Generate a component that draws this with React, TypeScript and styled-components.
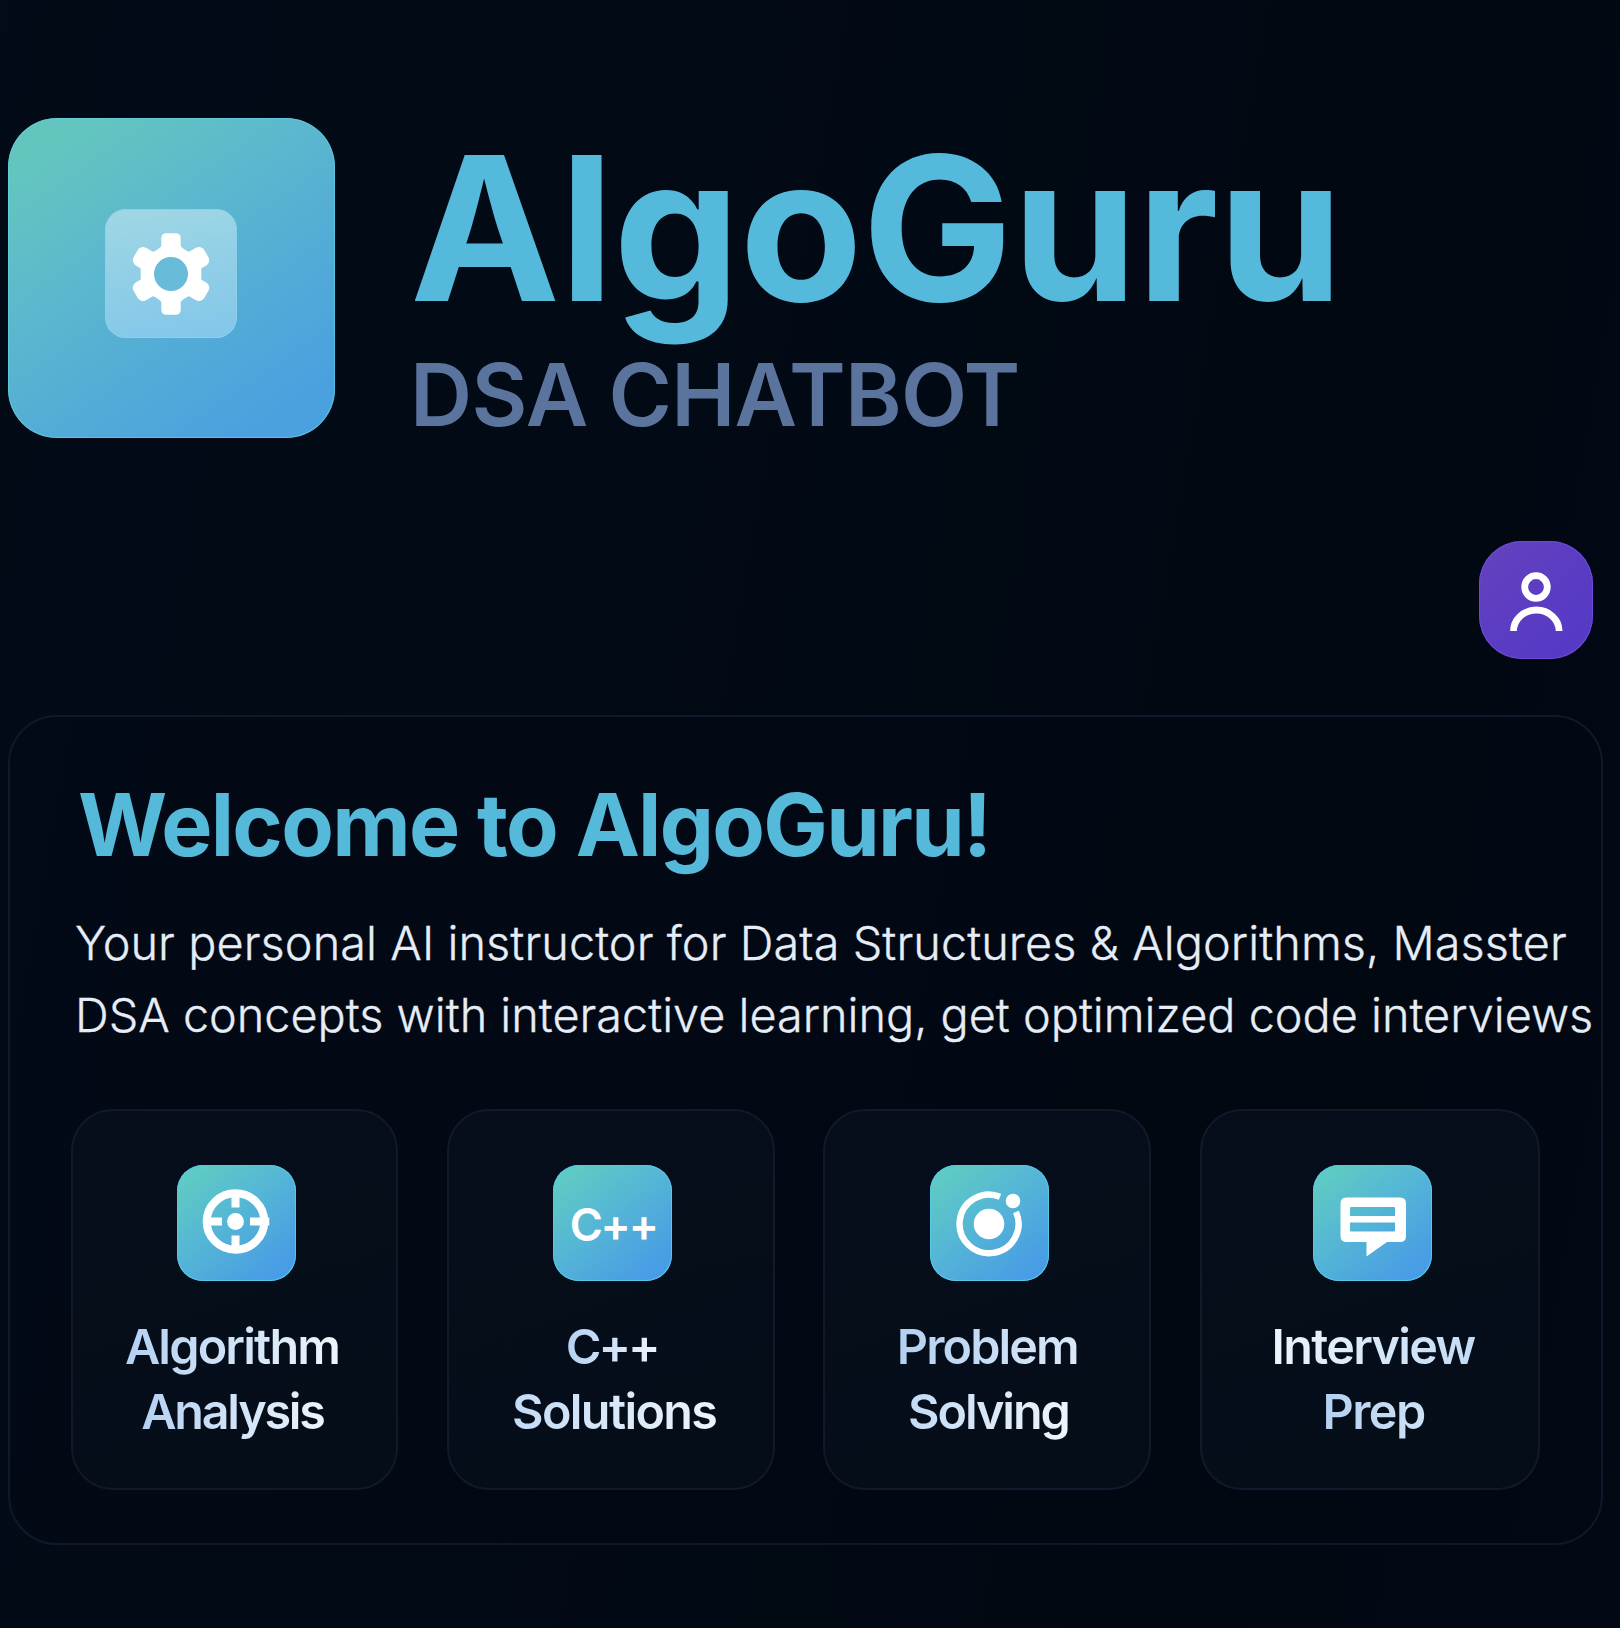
import React from 'react';
import styled, { createGlobalStyle } from 'styled-components';

const GlobalStyle = createGlobalStyle`
  * {
    box-sizing: border-box;
  }
  body {
    margin: 0;
    background: #020812;
    font-family: Inter, 'Liberation Sans', sans-serif;
  }
`;

const Page = styled.div`
  min-height: 1628px;
  width: 1620px;
  padding: 118px 17px 82px 8px;
  overflow: hidden;
  background: linear-gradient(100deg, #030b18 0%, #020a15 40%, #010812 75%, #020914 100%);
`;

const Header = styled.header`
  display: flex;
  align-items: flex-start;
  height: 321px;
`;

const Logo = styled.div`
  display: flex;
  align-items: center;
  justify-content: center;
  flex: none;
  width: 327px;
  height: 320px;
  padding: 0 1px 9px 0;
  border-radius: 49px;
  background: linear-gradient(145deg, #63c6be 10%, #5cb8cd 38%, #53acd6 62%, #4ba1df 88%);
  box-shadow: inset 0 0 0 1px #5fd3e4a0;
`;

const LogoInner = styled.div`
  display: flex;
  align-items: center;
  justify-content: center;
  width: 132px;
  height: 129px;
  border-radius: 21px;
  background: linear-gradient(170deg, #9fd7e4, #82c6ea);
  box-shadow: inset 0 0 0 1px #8fcfe8;
`;

const Brand = styled.div`
  display: flex;
  flex-direction: column;
  gap: 24px;
  margin: 9px 0 0 75px;
`;

const BrandName = styled.h1`
  margin: 0;
  font-size: 201px;
  font-weight: 700;
  line-height: 201px;
  letter-spacing: -0.67px;
  color: #55b9db;
`;

const BrandTag = styled.p`
  margin: 0;
  font-size: 86px;
  font-weight: 600;
  line-height: 86px;
  letter-spacing: -0.72px;
  color: #5a749e;
`;

const Toolbar = styled.div`
  display: flex;
  justify-content: flex-end;
  padding: 102px 10px 56px 0;
`;

const UserButton = styled.button`
  display: flex;
  padding: 0;
  border: 0;
  border-radius: 43px;
  background: linear-gradient(135deg, #6543bd, #5a3cc4 55%, #5539c4);
  box-shadow: inset 0 0 0 1px #6b4ad8;
`;

const Panel = styled.main`
  height: 830px;
  padding: 65px 0 0 61px;
  border: 2px solid #0e192b;
  border-radius: 49px;
  background: rgba(3, 10, 20, 0.35);
`;

const Heading = styled.h2`
  margin: 0 0 39px 7px;
  font-size: 86px;
  font-weight: 700;
  line-height: 86px;
  letter-spacing: -1.73px;
  white-space: nowrap;
  color: #55b9da;
`;

const Intro = styled.p`
  margin: 0 0 58px 4px;
  font-size: 46.8px;
  font-weight: 300;
  line-height: 72px;
  white-space: nowrap;
  color: #e6edf6;
  -webkit-text-stroke: 0.3px #e6edf6;
`;

const IntroLine = styled.span<{ $spacing: number }>`
  display: block;
  letter-spacing: ${(p) => p.$spacing}px;
`;

const Features = styled.section`
  display: grid;
  grid-template-columns: 327px 328px 328px 340px;
  column-gap: 48.7px;
`;

const Card = styled.article`
  display: flex;
  flex-direction: column;
  align-items: center;
  height: 381px;
  padding-top: 54px;
  border: 2px solid #101a2a;
  border-radius: 42px;
  background: linear-gradient(160deg, #060e1b, #040d18);
`;

const CardIcon = styled.div`
  display: flex;
  align-items: center;
  justify-content: center;
  width: 119px;
  height: 116px;
  margin: 0 0 33px 4px;
  border-radius: 26px;
  background: linear-gradient(140deg, #5fcbc3 8%, #56b8d4 42%, #4ba2e1 78%, #4599e8 100%);
  box-shadow: inset 0 0 0 1px #56c8e8;
`;

const IconText = styled.span`
  margin: 3px 0 0 1px;
  font-size: 45px;
  font-weight: 600;
  line-height: 60px;
  letter-spacing: -2.2px;
  color: #ffffff;
`;

const CardLabel = styled.h3`
  display: flex;
  flex-direction: column;
  align-items: center;
  margin: 0;
  font-size: 48.5px;
  font-weight: 600;
  line-height: 65.3px;
  white-space: nowrap;
`;

const LabelLine = styled.span<{ $spacing: number; $nudge: number; $from: string; $to: string }>`
  margin-left: ${(p) => p.$nudge}px;
  letter-spacing: ${(p) => p.$spacing}px;
  background: linear-gradient(95deg, ${(p) => p.$from}, ${(p) => p.$to});
  background-clip: text;
  -webkit-background-clip: text;
  color: transparent;
`;

const GearIcon = () => (
  <svg width="80" height="84" viewBox="-40 -42 80 84" fill="none">
    <rect x="-9.7" y="-40.8" width="19.4" height="81.6" rx="4.8" fill="#fff" />
    {[60, 120].map((angle) => (
      <rect key={angle} x="-10.2" y="-40.8" width="20.4" height="81.6" rx="6" fill="#fff" transform={`rotate(${angle})`} />
    ))}
    <path d="M-20 -21.5 Q-14 -23 -9 -28.5 H9 Q14 -23 20 -21.5 L30.3 -6 V6 L20 21.5 Q14 23 9 28.5 H-9 Q-14 23 -20 21.5 L-30.3 6 V-6Z" fill="#fff" />
    <circle r="17" fill="#68bbd9" />
  </svg>
);

const UserIcon = () => (
  <svg width="114" height="118" viewBox="0 0 114 118" fill="none" stroke="#fff" strokeWidth="6.8">
    <circle cx="57" cy="46" r="11.3" />
    <path d="M34.5 90 A22.8 21 0 0 1 80.1 90" />
  </svg>
);

const TargetIcon = () => (
  <svg width="119" height="117" viewBox="0 0 119 117" fill="none" stroke="#fff" strokeWidth="8">
    <ellipse cx="58.5" cy="56.5" rx="28.8" ry="28.2" />
    <circle cx="58.5" cy="56.5" r="8.4" fill="#fff" stroke="none" />
    <path d="M58.5 28 V42.5 M58.5 70.5 V85 M29 56.5 H45 M73 56.5 H92.3" />
  </svg>
);

const OrbitIcon = () => (
  <svg width="119" height="117" viewBox="0 0 119 117" fill="none">
    <path d="M70 31.7 A29.5 29.3 0 1 0 86 47" stroke="#fff" strokeWidth="6.4" />
    <circle cx="59" cy="59" r="15.3" fill="#fff" />
    <circle cx="83" cy="36" r="7.3" fill="#fff" />
  </svg>
);

const ChatIcon = () => (
  <svg width="119" height="117" viewBox="0 0 119 117">
    <path
      fill="#fff"
      fillRule="evenodd"
      d="M33.5 32.5 H87 Q93 32.5 93 38.5 V71 Q93 77 87 77 H74 L53.5 91.5 V77 H33.5 Q27.5 77 27.5 71 V38.5 Q27.5 32.5 33.5 32.5 Z M38 42 Q37 42 37 43 V51 H82 V43 Q82 42 81 42 Z M37 57.5 V65.5 Q37 66.5 38 66.5 H81 Q82 66.5 82 65.5 V57.5 Z"
    />
  </svg>
);

type Line = { text: string; spacing: number; nudge: number; from: string; to: string };
type Feature = { icon: React.ReactNode; lines: Line[] };

const PALE = '#eef5fc';
const MIST = '#dbe9f8';
const SKY = '#b3d0f2';

const features: Feature[] = [
  {
    icon: <TargetIcon />,
    lines: [
      { text: 'Algorithm', spacing: -1.85, nudge: -5, from: SKY, to: PALE },
      { text: 'Analysis', spacing: -2.25, nudge: -4, from: SKY, to: PALE },
    ],
  },
  {
    icon: <IconText>C++</IconText>,
    lines: [
      { text: 'C++', spacing: -3, nudge: 2, from: SKY, to: PALE },
      { text: 'Solutions', spacing: -1.65, nudge: 7, from: '#c3dbf5', to: PALE },
    ],
  },
  {
    icon: <OrbitIcon />,
    lines: [
      { text: 'Problem', spacing: -1.9, nudge: 0, from: SKY, to: MIST },
      { text: 'Solving', spacing: -2.1, nudge: 2, from: '#c3dbf5', to: PALE },
    ],
  },
  {
    icon: <ChatIcon />,
    lines: [
      { text: 'Interview', spacing: -1.7, nudge: 6, from: PALE, to: '#c3dbf5' },
      { text: 'Prep', spacing: -1.6, nudge: 7, from: SKY, to: '#cfe2f6' },
    ],
  },
];

export default function App() {
  return (
    <>
      <GlobalStyle />
      <Page>
        <Header>
          <Logo>
            <LogoInner>
              <GearIcon />
            </LogoInner>
          </Logo>
          <Brand>
            <BrandName>AlgoGuru</BrandName>
            <BrandTag>DSA CHATBOT</BrandTag>
          </Brand>
        </Header>
        <Toolbar>
          <UserButton aria-label="Account">
            <UserIcon />
          </UserButton>
        </Toolbar>
        <Panel>
          <Heading>Welcome to AlgoGuru!</Heading>
          <Intro>
            <IntroLine $spacing={0.08}>
              Your personal AI instructor for Data Structures &amp; Algorithms, Masster
            </IntroLine>
            <IntroLine $spacing={0}>
              DSA concepts with interactive learning, get optimized code interviews
            </IntroLine>
          </Intro>
          <Features>
            {features.map((feature) => (
              <Card key={feature.lines[0].text}>
                <CardIcon>{feature.icon}</CardIcon>
                <CardLabel>
                  {feature.lines.map((line) => (
                    <LabelLine
                      key={line.text}
                      $spacing={line.spacing}
                      $nudge={line.nudge}
                      $from={line.from}
                      $to={line.to}
                    >
                      {line.text}
                    </LabelLine>
                  ))}
                </CardLabel>
              </Card>
            ))}
          </Features>
        </Panel>
      </Page>
    </>
  );
}
